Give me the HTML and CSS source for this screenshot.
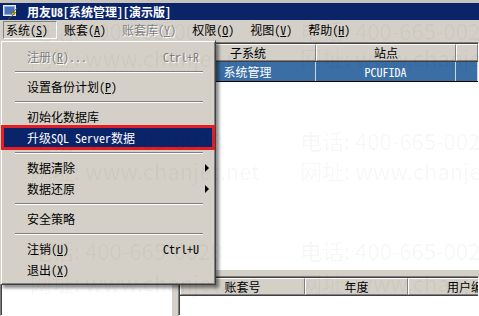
FILE: index.html
```html
<!DOCTYPE html>
<html lang="zh-CN">
<head>
  <meta charset="UTF-8" />
  <title>用友U8[系统管理][演示版]</title>
  <link rel="stylesheet" href="styles.css">
</head>
<body>
  <div class="strip"></div>
  <div class="titlebar">
    <svg class="appicon" width="16" height="16" viewBox="0 0 16 16">
      <rect x="0.5" y="1.5" width="12" height="10" fill="#8fb0dc" stroke="#e8eef8"/>
      <rect x="2" y="3" width="9" height="7" fill="#4a72b8"/>
      <path d="M14 4 L8 10 L11 10 L5 15.5 L13 8.5 L10 8.5 L14 4Z" fill="#f6c800" stroke="#7a5c00" stroke-width="0.6"/>
    </svg>
    <span class="title">用友U8[系统管理][演示版]</span>
  </div>

  <div class="menubar">
    <span class="mi pressed">系统(<u>S</u>)</span>
    <span class="mi">账套(<u>A</u>)</span>
    <span class="mi off">账套库(<u>Y</u>)</span>
    <span class="mi">权限(<u>O</u>)</span>
    <span class="mi">视图(<u>V</u>)</span>
    <span class="mi">帮助(<u>H</u>)</span>
  </div>

  <div class="client">
    <div class="tree"></div>
    <div class="right">
      <div class="list list-top">
        <div class="lv-head cols-top">
          <span>子系统</span><span>站点</span><span></span>
        </div>
        <div class="lv-row sel cols-top">
          <span>系统管理</span><span>PCUFIDA</span><span></span>
        </div>
      </div>
      <div class="list list-bottom">
        <div class="lv-head cols-bottom">
          <span>账套号</span><span>年度</span><span>用户编码</span>
        </div>
      </div>
    </div>
  </div>

  <!-- dropdown of 系统 menu -->
  <div class="menu">
    <div class="item off"><span>注册(<u>R</u>)...</span><span class="key">Ctrl+R</span></div>
    <div class="sep"></div>
    <div class="item">设置备份计划(<u>P</u>)</div>
    <div class="sep"></div>
    <div class="item">初始化数据库</div>
    <div class="item hl">升级SQL Server数据</div>
    <div class="sep"></div>
    <div class="item sub">数据清除</div>
    <div class="item sub">数据还原</div>
    <div class="sep"></div>
    <div class="item">安全策略</div>
    <div class="sep"></div>
    <div class="item"><span>注销(<u>U</u>)</span><span class="key">Ctrl+U</span></div>
    <div class="item">退出(<u>X</u>)</div>
  </div>

  <div class="wm">
    <div class="wm-line" style="top:16px"><span>电话: 400-665-0028</span><span>电话: 400-665-0028</span></div>
    <div class="wm-line" style="top:43px"><span>网址: www.chanjet.net</span><span>网址: www.chanjet.net</span></div>
    <div class="wm-line" style="top:126px"><span>电话: 400-665-0028</span><span>电话: 400-665-0028</span></div>
    <div class="wm-line" style="top:156px"><span>网址: www.chanjet.net</span><span>网址: www.chanjet.net</span></div>
    <div class="wm-line" style="top:236px"><span>电话: 400-665-0028</span><span>电话: 400-665-0028</span></div>
    <div class="wm-line" style="top:268px"><span>网址: www.chanjet.net</span><span>网址: www.chanjet.net</span></div>
  </div>
</body>
</html>
```

FILE: styles.css
```css
body {
  margin: 0;
  width: 479px;
  height: 316px;
  overflow: hidden;
  position: relative;
  background: #d4d0c8;
  font-family: "Noto Sans Mono CJK SC", "Noto Sans CJK SC", sans-serif;
  font-size: 12px;
  color: #000;
}

u {
  text-decoration: underline;
  text-underline-offset: 1px;
}

.strip {
  height: 3px;
  background: #c8c4bc;
}

.titlebar {
  height: 17px;
  background: #0a246a;
  display: flex;
  align-items: center;
  gap: 8px;
  padding-left: 3px;
  color: #fff;
  font-weight: bold;
  line-height: 17px;
}

.appicon {
  display: block;
  flex: none;
}

.menubar {
  height: 20px;
  display: flex;
  align-items: center;
  padding-left: 3px;
}

.mi {
  line-height: 16px;
  padding: 0 8px 0 2px;
  margin-right: 4px;
  border: 1px solid transparent;
  white-space: nowrap;
}

.mi.pressed {
  border-color: #808080 #fff #fff #808080;
}

.off {
  color: #808080;
  text-shadow: 1px 1px 0 #fff;
}

.client {
  display: flex;
  gap: 6px;
  height: 276px;
  padding-top: 2px;
  box-sizing: border-box;
}

.tree,
.list {
  background: #fff;
  border: 1px solid;
  border-color: #808080 #fff #fff #808080;
  box-shadow: inset 1px 1px #404040;
  box-sizing: border-box;
}

.tree {
  width: 172px;
  flex: none;
}

.right {
  flex: 1;
  display: flex;
  flex-direction: column;
  gap: 6px;
  min-width: 0;
}

.list {
  padding: 1px 0 0 1px;
  overflow: hidden;
}

.list-top {
  height: 228px;
  flex: none;
}

.list-bottom {
  flex: 1;
}

.cols-top {
  display: grid;
  grid-template-columns: 136px 140px 1fr;
}

.cols-bottom {
  display: grid;
  grid-template-columns: 125px 103px 126px;
}

.lv-head span {
  height: 17px;
  line-height: 15px;
  text-align: center;
  background: #d4d0c8;
  border: 1px solid;
  border-color: #fff #808080 #808080 #fff;
  box-sizing: border-box;
  white-space: nowrap;
}

.lv-head {
  border-bottom: 1px solid #404040;
}

.lv-row span {
  height: 19px;
  line-height: 19px;
  text-align: center;
  border-right: 1px solid #c9d6e8;
  white-space: nowrap;
}

.lv-row {
  border-bottom: 1px solid #000;
}

.lv-row.sel {
  background: #3a6ea5;
  color: #fff;
}

/* 系统 dropdown */
.menu {
  position: absolute;
  left: 0;
  top: 40px;
  width: 216px;
  height: 245px;
  box-sizing: border-box;
  padding: 5px 2px 2px;
  background: #d4d0c8;
  border: 1px solid;
  border-color: #d4d0c8 #404040 #404040 #d4d0c8;
  box-shadow: inset 1px 1px #fff, inset -1px -1px #808080, 3px 3px 3px rgba(0, 0, 0, 0.45);
}

.item {
  height: 21px;
  display: flex;
  align-items: center;
  padding: 0 14px 0 24px;
  white-space: nowrap;
}

.item .key {
  margin-left: auto;
}

.item.sub::after {
  content: "";
  margin-left: auto;
  margin-right: -10px;
  border-left: 4px solid #000;
  border-top: 4px solid transparent;
  border-bottom: 4px solid transparent;
}

.item.hl {
  background: #0a246a;
  color: #fff;
  outline: 3px solid #e31e24;
  outline-offset: -1px;
}

.sep {
  height: 9px;
  display: flex;
  align-items: center;
}

.sep::before {
  content: "";
  flex: 1;
  margin: 0 10px 0 12px;
  border-top: 1px solid #808080;
  border-bottom: 1px solid #fff;
}

/* watermark over the screenshot */
.wm {
  position: absolute;
  inset: 0;
  overflow: hidden;
  pointer-events: none;
  font-family: "Noto Sans CJK SC", sans-serif;
  font-size: 22px;
  color: rgba(0, 0, 0, 0.045);
}

.wm-line {
  position: absolute;
  left: 30px;
  display: flex;
  line-height: 28px;
  white-space: nowrap;
}

.wm-line span {
  width: 270px;
  flex: none;
}
```
